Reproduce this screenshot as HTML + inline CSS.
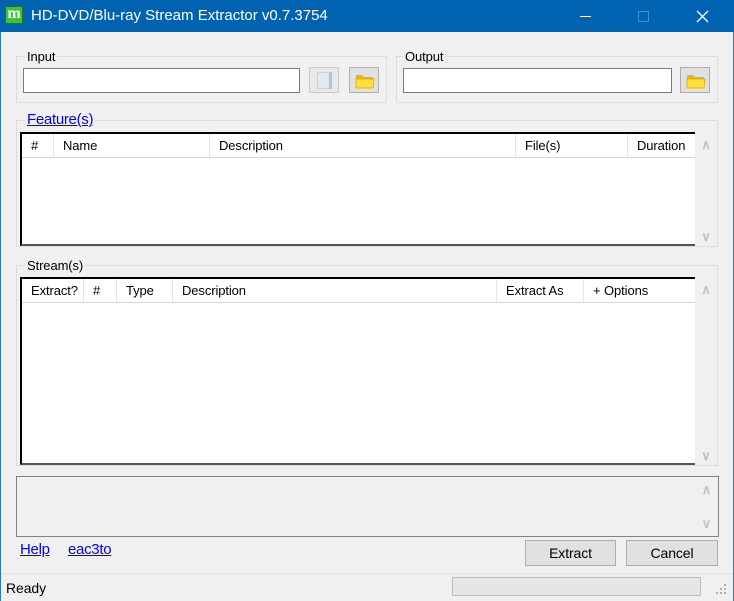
<!DOCTYPE html>
<html><head><meta charset="utf-8"><style>
*{margin:0;padding:0;box-sizing:border-box}
body{width:734px;height:601px;background:#f0f0f0;font-family:"Liberation Sans",sans-serif;font-size:13px;color:#000;position:relative;overflow:hidden;letter-spacing:-0.1px}
.a{position:absolute}
.gb{position:absolute;border:1px solid #dcdcdc}
.lbl{position:absolute;background:#f0f0f0;padding:0 2px;line-height:15px}
.tb{position:absolute;background:#fff;border:1px solid #7a7a7a}
.btn{position:absolute;background:#e1e1e1;border:1px solid #adadad}
.lv{position:absolute;background:#fff;border-top:2px solid #000;border-left:2px solid #000;border-bottom:2px solid #555}
.hd{position:absolute;top:0;height:24px;border-bottom:1px solid #d5d5d5;width:100%}
.col{position:absolute;top:0;height:23px;line-height:24px;padding-left:9px;border-right:1px solid #e5e5e5;white-space:nowrap}
.sb{position:absolute;background:#f0f0f0;color:#c0c0c0;font-size:13px;text-align:center;font-weight:bold}
a{color:#0000ff;text-decoration:underline;font-size:15px;letter-spacing:-0.3px}
</style></head><body>
<div class="a" style="left:0;top:0;width:734px;height:32px;background:#0063b1"></div>
<div class="a" style="left:0;top:32px;width:1px;height:569px;background:#2b79c2"></div>
<div class="a" style="right:0;top:32px;width:1px;height:569px;background:#2b79c2"></div>
<div class="a" style="left:5px;top:6px;width:18px;height:18px;background:#3cc23c;border:1px solid #1a7a1a;color:#fff;font-weight:bold;font-size:16px;line-height:14px;text-align:center;font-family:'Liberation Serif',serif">m</div>
<div class="a" style="left:31px;top:7px;color:#fff;font-size:15px;letter-spacing:0">HD-DVD/Blu-ray Stream Extractor v0.7.3754</div>
<div class="a" style="left:580px;top:16px;width:11px;height:1px;background:#fff"></div>
<div class="a" style="left:638px;top:11px;width:11px;height:11px;border:1px solid #4a8ccc"></div>
<svg class="a" style="left:696px;top:10px" width="13" height="13"><path d="M1 1L12 12M12 1L1 12" stroke="#fff" stroke-width="1.3"/></svg>

<div class="gb" style="left:16px;top:56px;width:371px;height:47px"></div>
<div class="lbl" style="left:25px;top:49px">Input</div>
<div class="tb" style="left:23px;top:68px;width:277px;height:25px"></div>
<div class="btn" style="left:309px;top:67px;width:30px;height:26px;background:#e8e8e8;border-color:#c8c8c8"><div class="a" style="left:7px;top:4px;width:13px;height:17px;background:#dfe9ef;border:1px solid #c8d2d8"></div><div class="a" style="left:19px;top:4px;width:3px;height:17px;background:#b8c2c8"></div></div>
<div class="btn" style="left:349px;top:67px;width:30px;height:26px"><svg class="a" style="left:5px;top:4px" width="20" height="17"><path d="M1 3h6l2 2h9v10H1z" fill="#e8b800"/><path d="M1 7h18l-1 9H1z" fill="#ffe03a" stroke="#d9a800" stroke-width=".8"/></svg></div>

<div class="gb" style="left:396px;top:56px;width:322px;height:47px"></div>
<div class="lbl" style="left:403px;top:49px">Output</div>
<div class="tb" style="left:403px;top:68px;width:269px;height:25px"></div>
<div class="btn" style="left:680px;top:67px;width:30px;height:26px"><svg class="a" style="left:5px;top:4px" width="20" height="17"><path d="M1 3h6l2 2h9v10H1z" fill="#e8b800"/><path d="M1 7h18l-1 9H1z" fill="#ffe03a" stroke="#d9a800" stroke-width=".8"/></svg></div>

<div class="gb" style="left:16px;top:120px;width:702px;height:127px"></div>
<div class="lbl" style="left:25px;top:112px"><a>Feature(s)</a></div>
<div class="lv" style="left:20px;top:132px;width:675px;height:114px">
<div class="hd">
<div class="col" style="left:0;width:32px">#</div>
<div class="col" style="left:32px;width:156px">Name</div>
<div class="col" style="left:188px;width:306px">Description</div>
<div class="col" style="left:494px;width:112px">File(s)</div>
<div class="col" style="left:606px;width:70px;border:none">Duration</div>
</div></div>
<div class="sb" style="left:695px;top:134px;width:22px;height:112px"><div style="margin-top:3px">&#8743;</div><div style="margin-top:76px">&#8744;</div></div>

<div class="gb" style="left:16px;top:265px;width:702px;height:201px"></div>
<div class="lbl" style="left:25px;top:258px">Stream(s)</div>
<div class="lv" style="left:20px;top:277px;width:675px;height:188px">
<div class="hd">
<div class="col" style="left:0;width:62px">Extract?</div>
<div class="col" style="left:62px;width:33px">#</div>
<div class="col" style="left:95px;width:56px">Type</div>
<div class="col" style="left:151px;width:324px">Description</div>
<div class="col" style="left:475px;width:87px">Extract As</div>
<div class="col" style="left:562px;width:110px;border:none">+ Options</div>
</div></div>
<div class="sb" style="left:695px;top:279px;width:22px;height:186px"><div style="margin-top:3px">&#8743;</div><div style="margin-top:150px">&#8744;</div></div>

<div class="a" style="left:16px;top:476px;width:703px;height:61px;border:1px solid #828282;background:#f0f0f0"></div>
<div class="sb" style="left:696px;top:477px;width:21px;height:59px;background:#f0f0f0"><div style="margin-top:5px">&#8743;</div><div style="margin-top:18px">&#8744;</div></div>

<div class="a" style="left:20px;top:541px"><a>Help</a></div>
<div class="a" style="left:68px;top:541px"><a>eac3to</a></div>
<div class="btn" style="left:525px;top:540px;width:91px;height:26px;text-align:center;line-height:24px;font-size:14px">Extract</div>
<div class="btn" style="left:626px;top:540px;width:92px;height:26px;text-align:center;line-height:24px;font-size:14px">Cancel</div>

<div class="a" style="left:1px;top:573px;width:732px;height:1px;background:#e3e3e3"></div>
<div class="a" style="left:6px;top:580px;font-size:14px">Ready</div>
<div class="a" style="left:452px;top:577px;width:249px;height:19px;background:#e6e6e6;border:1px solid #bcbcbc"></div>
<svg class="a" style="left:716px;top:584px" width="12" height="12"><g fill="#b0b0b0"><rect x="8" y="0" width="2" height="2"/><rect x="4" y="4" width="2" height="2"/><rect x="8" y="4" width="2" height="2"/><rect x="0" y="8" width="2" height="2"/><rect x="4" y="8" width="2" height="2"/><rect x="8" y="8" width="2" height="2"/></g></svg>
</body></html>
